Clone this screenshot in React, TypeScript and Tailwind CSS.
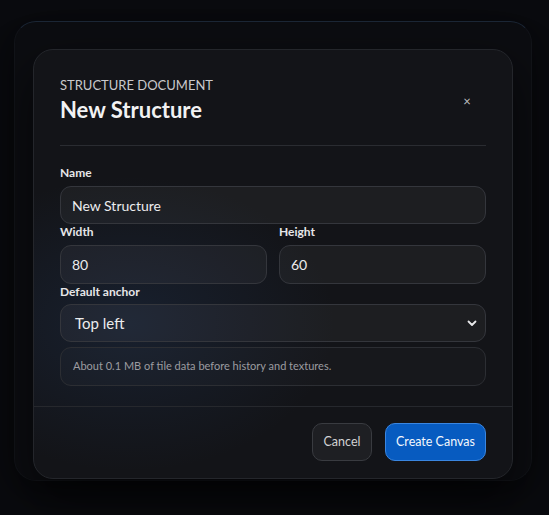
import React from "react";

export default function App() {
  return (
    <div
      className="w-[549px] h-[515px] bg-[#0a0b0f] overflow-hidden pt-[21px] pl-[14px]"
      style={{ fontFamily: "Lato, 'Noto Sans', sans-serif" }}
    >
      <div className="w-[518px] h-[460px] rounded-[22px] border border-[#121419] border-t-[#1c2736] bg-[#0c0d11] pt-[27px] px-[18px] shadow-[0_10px_40px_rgba(0,0,0,0.5)]">
        <div className="w-[480px] h-[430px] rounded-[20px] border border-[#24262b] bg-[#131418] bg-[radial-gradient(ellipse_at_20%_64%,rgba(38,66,110,0.26),transparent_38%)] flex flex-col shadow-[0_20px_50px_rgba(0,0,0,0.6)]">
          <div className="px-[26px] pt-[25px]">
            <div className="flex items-center justify-between pb-[21px] border-b border-[#2a2c31]">
              <div className="flex flex-col">
                <div className="text-[13px] leading-[20px] text-[#c9c9cc] uppercase">
                  Structure Document
                </div>
                <div className="text-[22px] leading-[28px] font-bold text-[#f2f2f3] mt-[1px]">
                  New Structure
                </div>
              </div>
              <button className="w-[38px] h-[38px] mt-[4px] flex items-center justify-center text-[#c0c0c3] text-[13px] leading-none">
                ×
              </button>
            </div>
          </div>
          <div className="px-[26px] pt-[20px] pb-[20px] flex flex-col gap-[1px]">
            <label className="flex flex-col">
              <span className="text-[12px] leading-[14px] font-bold text-[#e6e6e8] mb-[6px]">Name</span>
              <div className="h-[38px] rounded-[11px] border border-[#34363c] bg-[rgba(255,255,255,0.045)] flex items-center px-[11px] text-[14px] text-[#ececee]">
                New Structure
              </div>
            </label>
            <div className="grid grid-cols-2 gap-[12px]">
              <label className="flex flex-col">
                <span className="text-[12px] leading-[14px] font-bold text-[#e6e6e8] mb-[6px]">Width</span>
                <div className="h-[39px] rounded-[11px] border border-[#34363c] bg-[rgba(255,255,255,0.045)] flex items-center px-[11px] text-[14px] text-[#ececee]">
                  80
                </div>
              </label>
              <label className="flex flex-col">
                <span className="text-[12px] leading-[14px] font-bold text-[#e6e6e8] mb-[6px]">Height</span>
                <div className="h-[39px] rounded-[11px] border border-[#34363c] bg-[rgba(255,255,255,0.045)] flex items-center px-[11px] text-[14px] text-[#ececee]">
                  60
                </div>
              </label>
            </div>
            <label className="flex flex-col">
              <span className="text-[12px] leading-[14px] font-bold text-[#e6e6e8] mb-[5px]">Default anchor</span>
              <div className="h-[38px] rounded-[11px] border border-[#34363c] bg-[rgba(255,255,255,0.045)] flex items-center justify-between pl-[14px] pr-[7px] text-[15px] text-[#ececee]">
                <span>Top left</span>
                <svg width="12" height="12" viewBox="0 0 12 12" fill="none">
                  <path d="M2.5 4.5 L6 8 L9.5 4.5" stroke="#e8e8ea" strokeWidth="1.8" strokeLinecap="round" strokeLinejoin="round" />
                </svg>
              </div>
            </label>
            <div className="mt-[4px] h-[39px] rounded-[11px] border border-[#2c2e33] bg-[rgba(255,255,255,0.02)] flex items-center px-[12px] text-[11px] text-[#9c9ca0]">
              About 0.1 MB of tile data before history and textures.
            </div>
          </div>
          <div className="border-t border-[#26282d] px-[26px] pt-[16px] flex justify-end gap-[13px]">
            <button className="h-[38px] w-[60px] rounded-[10px] border border-[#393b40] bg-[#1e1f23] text-[12.5px] text-[#d2d2d4]">
              Cancel
            </button>
            <button className="h-[38px] w-[101px] rounded-[10px] border border-[#3a86e0] bg-[#075bc0] text-[12.5px] text-[#f4f7fc]">
              Create Canvas
            </button>
          </div>
        </div>
      </div>
    </div>
  );
}
